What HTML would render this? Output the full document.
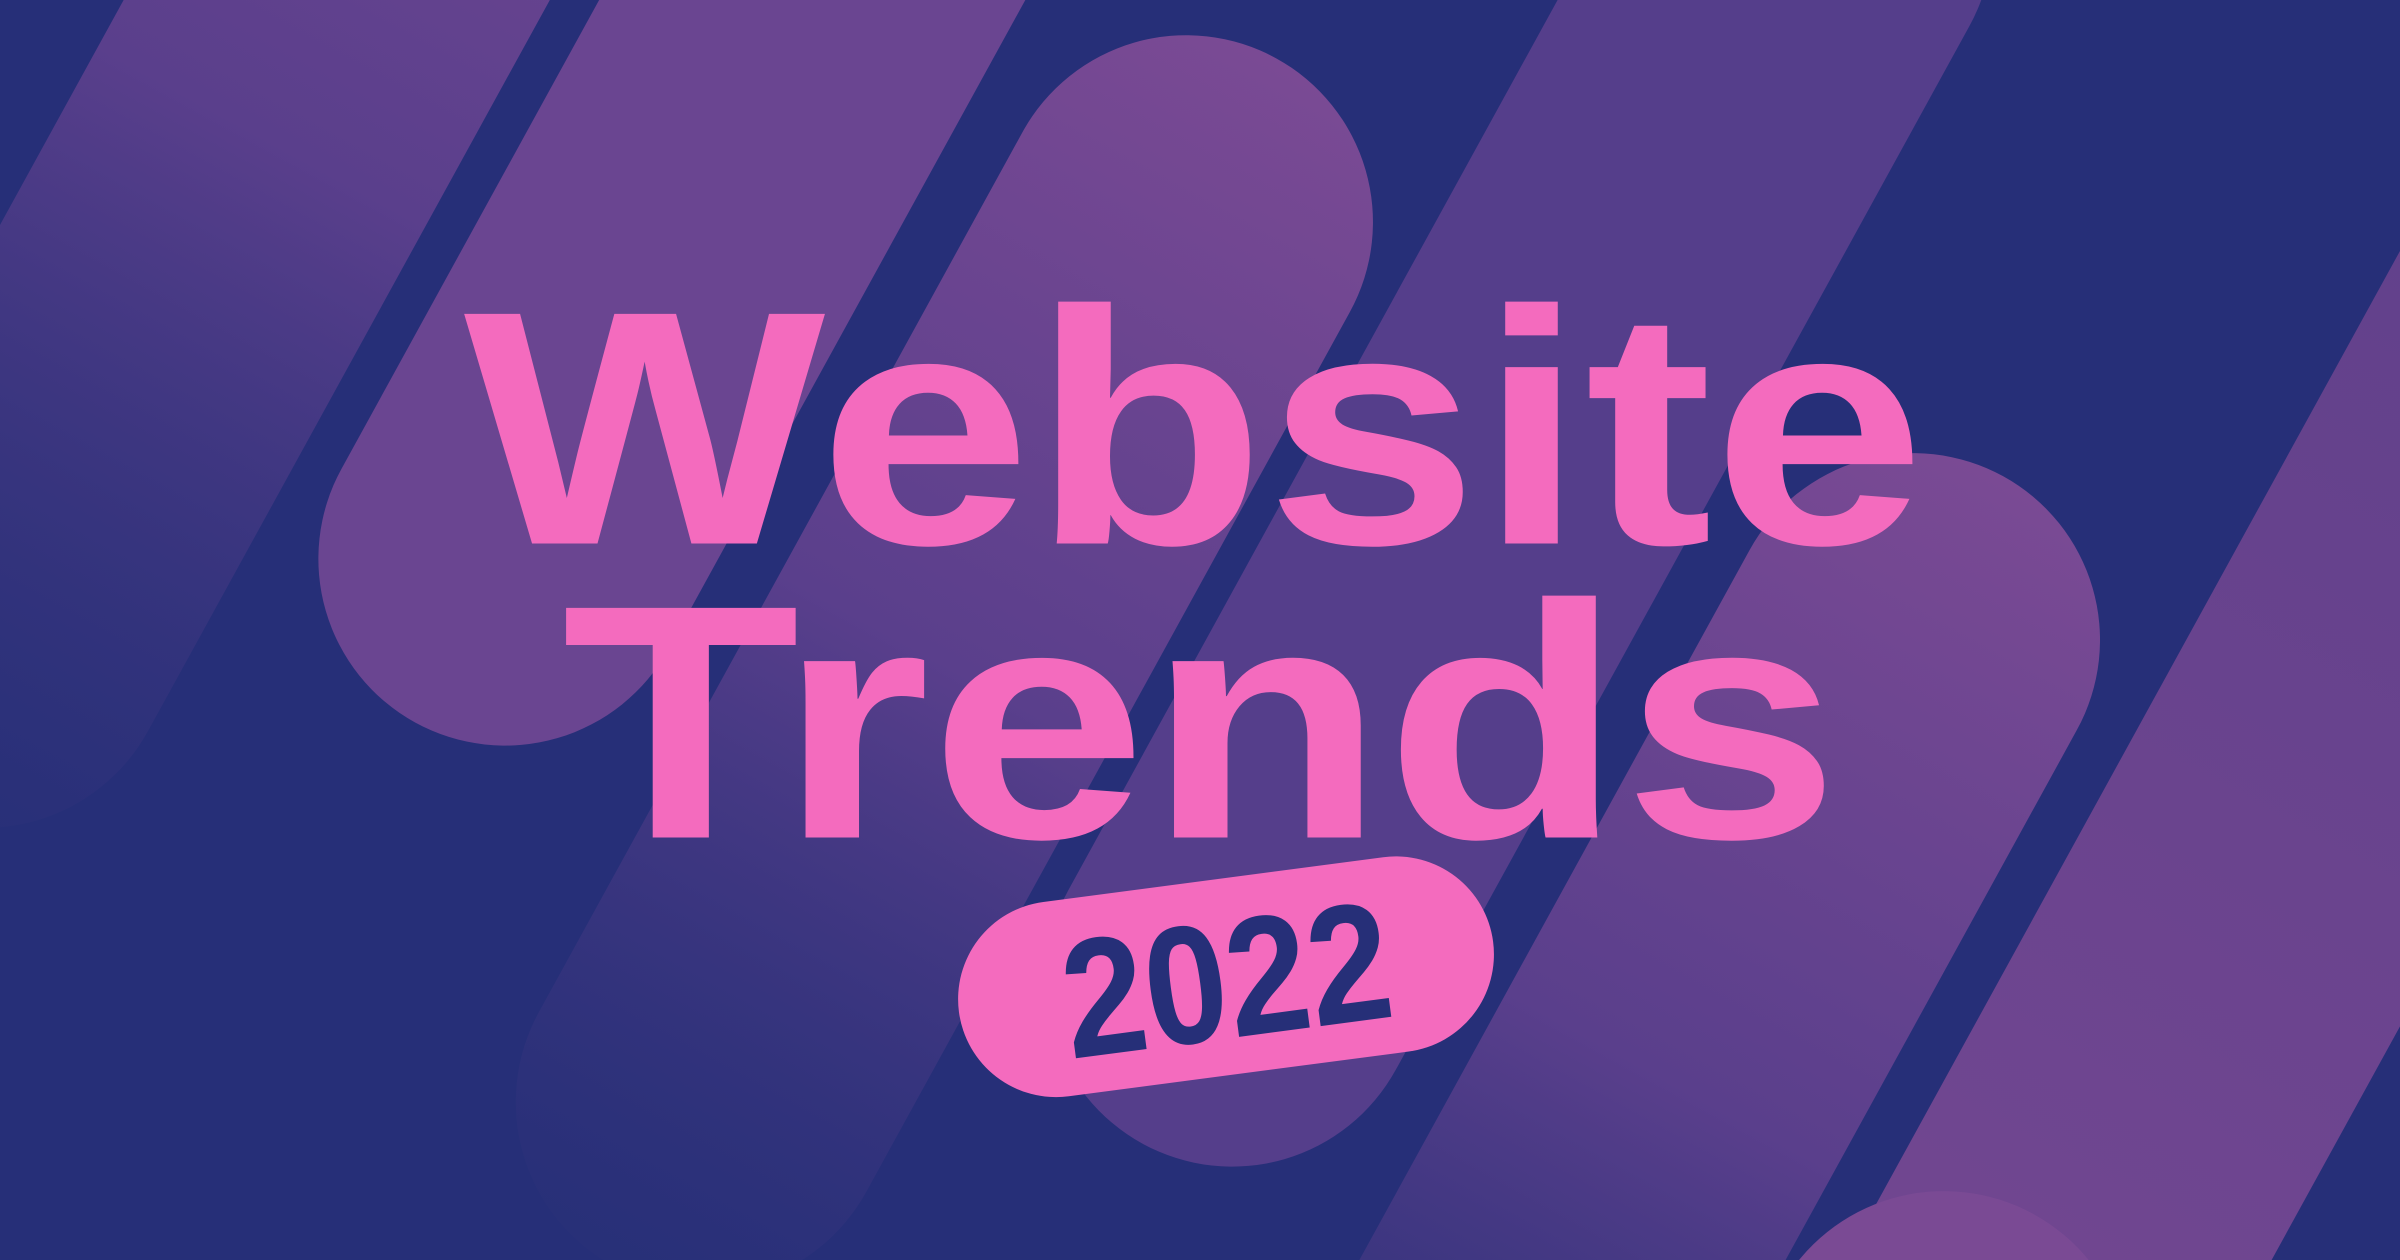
<!DOCTYPE html>
<html><head><meta charset="utf-8"><style>html,body{margin:0;padding:0;background:#262f78;overflow:hidden;width:2400px;height:1260px}svg{display:block}</style></head>
<body>
<svg width="2400" height="1260" viewBox="0 0 1568 823" preserveAspectRatio="none" xmlns="http://www.w3.org/2000/svg">
<defs>
<linearGradient id="g" x1="0" y1="0" x2="0" y2="1">
<stop offset="0" stop-color="#7a4a94"/><stop offset="0.5" stop-color="#5a3f8c"/><stop offset="1" stop-color="#2c3179" stop-opacity="0.3"/>
</linearGradient>
<linearGradient id="g2" x1="0" y1="0" x2="0" y2="1">
<stop offset="0" stop-color="#5e3f8a"/><stop offset="1" stop-color="#7a4a94"/>
</linearGradient>
</defs>
<rect width="1568" height="823" fill="#262f78"/>
<g transform="translate(220,0) rotate(28.8)"><rect x="-122" y="-400" width="244" height="1000" rx="122" fill="url(#g)"/></g>
<g transform="translate(330,365) rotate(28.8)"><rect x="-122" y="-800" width="244" height="922" rx="122" fill="#6a4591"/></g>
<g transform="translate(775,145) rotate(28.8)"><rect x="-122" y="-122" width="244" height="900" rx="122" fill="url(#g)"/></g>
<g transform="translate(805,640) rotate(28.8)"><rect x="-122" y="-900" width="244" height="1022" rx="122" fill="#553e8b"/></g>
<g transform="translate(1250,418) rotate(28.8)"><rect x="-122" y="-122" width="244" height="900" rx="122" fill="url(#g)"/></g>
<g transform="translate(1440,650) rotate(28.8)"><rect x="-122" y="-700" width="244" height="1400" rx="122" fill="url(#g2)"/></g>
<g transform="translate(1270,900) rotate(28.8)"><rect x="-122" y="-122" width="244" height="500" rx="122" fill="#7a4a94"/></g>
<text x="303" y="355" textLength="955" lengthAdjust="spacingAndGlyphs" font-family="Liberation Sans, sans-serif" font-weight="bold" font-size="218" fill="#f46bbe">Website</text>
<text x="367" y="547" textLength="835" lengthAdjust="spacingAndGlyphs" font-family="Liberation Sans, sans-serif" font-weight="bold" font-size="218" fill="#f46bbe">Trends</text>
<g transform="translate(801,638) rotate(-7.5)">
<rect x="-176" y="-64" width="352" height="128" rx="64" fill="#f46bbe"/>
<text x="0" y="40" text-anchor="middle" textLength="215" lengthAdjust="spacingAndGlyphs" font-family="Liberation Sans, sans-serif" font-weight="bold" font-size="110" fill="#262f78">2022</text>
</g>
</svg>
</body></html>
